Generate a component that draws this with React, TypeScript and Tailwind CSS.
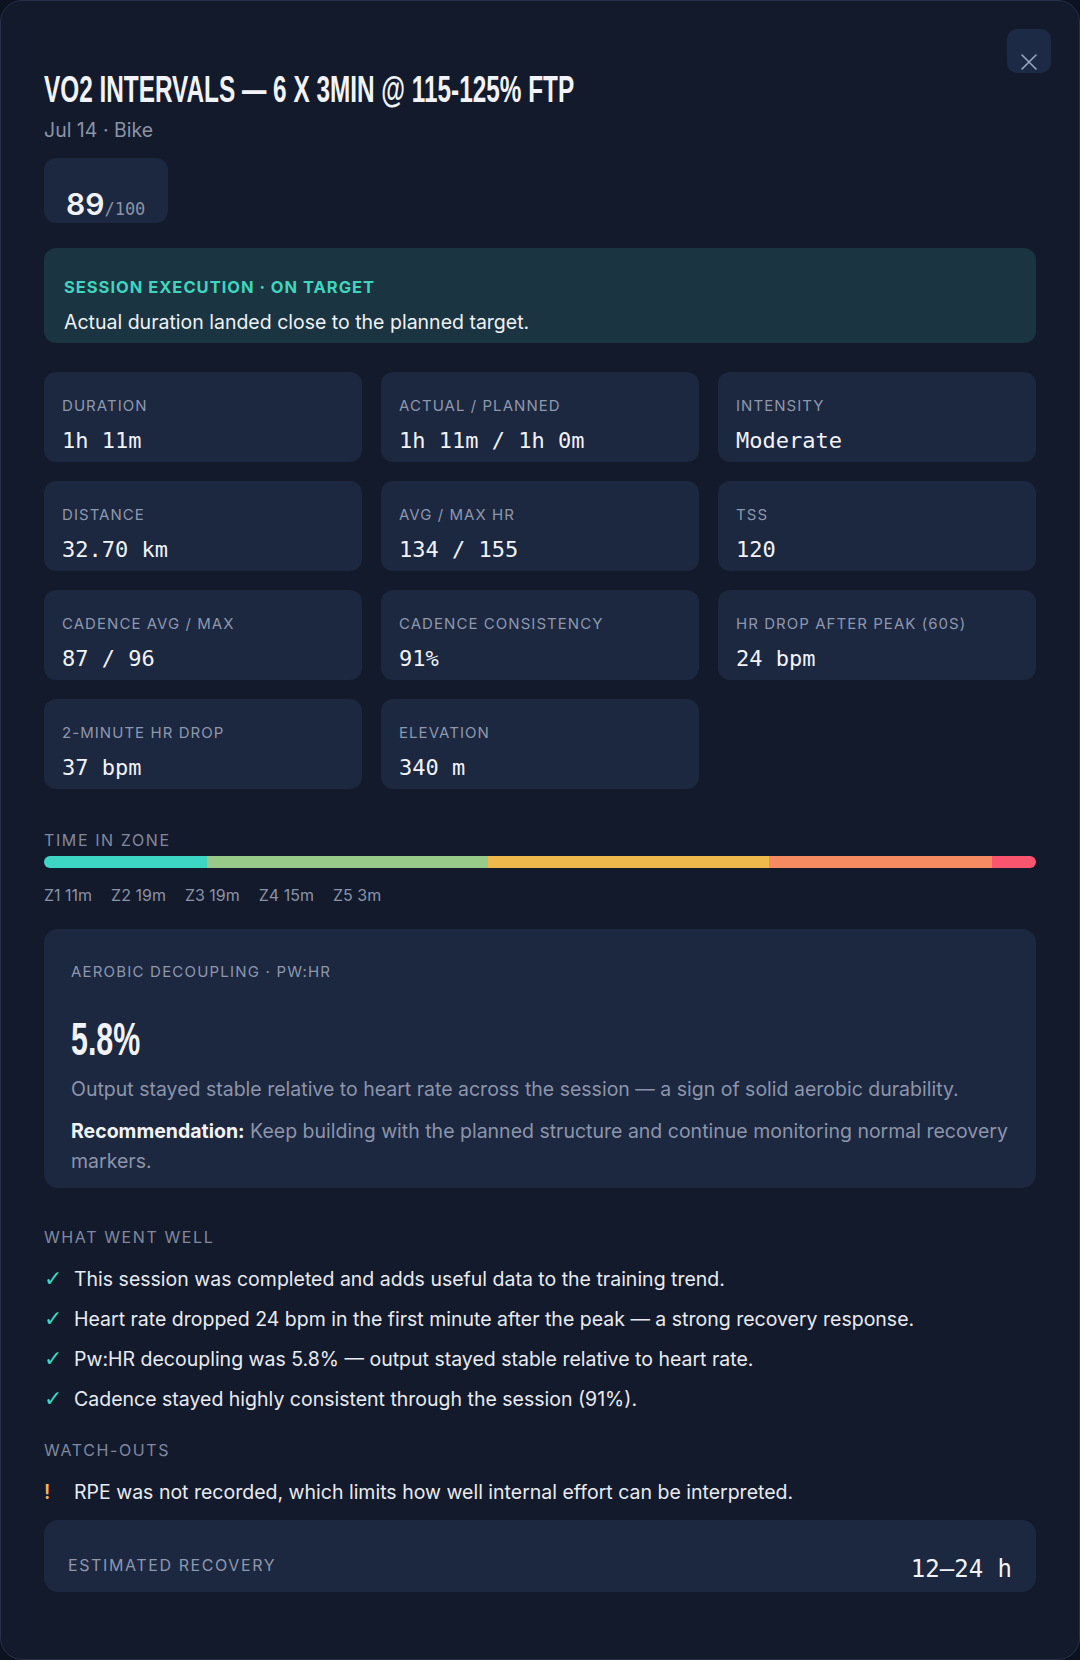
import React from 'react';

interface Metric {
  label: string;
  value: string;
}

interface Zone {
  name: string;
  minutes: number;
  color: string;
}

const metrics: Metric[] = [
  { label: 'Duration', value: '1h 11m' },
  { label: 'Actual / Planned', value: '1h 11m / 1h 0m' },
  { label: 'Intensity', value: 'Moderate' },
  { label: 'Distance', value: '32.70 km' },
  { label: 'Avg / Max HR', value: '134 / 155' },
  { label: 'TSS', value: '120' },
  { label: 'Cadence Avg / Max', value: '87 / 96' },
  { label: 'Cadence Consistency', value: '91%' },
  { label: 'HR Drop After Peak (60s)', value: '24 bpm' },
  { label: '2-Minute HR Drop', value: '37 bpm' },
  { label: 'Elevation', value: '340 m' },
];

const zones: Zone[] = [
  { name: 'Z1', minutes: 11, color: 'bg-[#3dd6c4]' },
  { name: 'Z2', minutes: 19, color: 'bg-[#98cb8a]' },
  { name: 'Z3', minutes: 19, color: 'bg-[#f0b94c]' },
  { name: 'Z4', minutes: 15, color: 'bg-[#f68a60]' },
  { name: 'Z5', minutes: 3, color: 'bg-[#f9556f]' },
];

const wentWell = [
  'This session was completed and adds useful data to the training trend.',
  'Heart rate dropped 24 bpm in the first minute after the peak — a strong recovery response.',
  'Pw:HR decoupling was 5.8% — output stayed stable relative to heart rate.',
  'Cadence stayed highly consistent through the session (91%).',
];

const watchOuts = ['RPE was not recorded, which limits how well internal effort can be interpreted.'];

const MetricCard: React.FC<Metric> = ({ label, value }) => (
  <div className="h-[90px] rounded-[12px] bg-[#1c2740] px-[18px] pt-[24px]">
    <div className="text-[15px] leading-5 uppercase tracking-[0.07em] text-[#8e98ad]">{label}</div>
    <div className="mt-[11px] font-['DejaVu_Sans_Mono',monospace] text-[22px] leading-[28px] text-[#f1f3f8]">
      {value}
    </div>
  </div>
);

const SectionLabel: React.FC<{ children: React.ReactNode; className?: string }> = ({ children, className }) => (
  <div className={`text-[16px] leading-5 uppercase tracking-[0.1em] text-[#8089a0] ${className ?? ''}`}>{children}</div>
);

export default function App() {
  const totalMinutes = zones.reduce((sum, z) => sum + z.minutes, 0);

  return (
    <div className="min-h-[1660px] bg-[#0d1220] font-['Inter',sans-serif]">
      <div className="relative h-[1660px] overflow-hidden rounded-[22px] border border-[#263049] bg-[#131a2b] px-[43px] pt-[70px]">
        {/* close button */}
        <button className="absolute right-[28px] top-[28px] flex h-[44px] w-[44px] justify-center rounded-[10px] bg-[#1d2a45] pt-[25px]">
          <svg width="16" height="16" viewBox="0 0 16 16" fill="none" stroke="#9aa6bf" strokeWidth="1.6" strokeLinecap="round">
            <path d="M1 1L15 15M15 1L1 15" />
          </svg>
        </button>

        {/* header */}
        <h1 className="origin-left scale-x-[0.658] whitespace-nowrap font-['Liberation_Sans',Arial,sans-serif] text-[37px] font-bold leading-none text-[#f1f3f8]">
          VO2 INTERVALS — 6 X 3MIN @ 115-125% FTP
        </h1>
        <div className="mt-[10px] text-[19.5px] leading-6 text-[#8b93a7]">Jul 14 · Bike</div>

        <div className="mt-[16px] flex h-[65px] w-[124px] items-end rounded-[12px] bg-[#1c2740] px-[22px] pb-[4px]">
          <div className="leading-none">
            <span className="text-[30px] font-semibold text-[#f1f3f8]">89</span>
            <span className="font-['DejaVu_Sans_Mono',monospace] text-[17px] text-[#8b93a7]">/100</span>
          </div>
        </div>

        {/* execution summary */}
        <div className="mt-[25px] h-[95px] rounded-[12px] bg-[#1a3441] px-[20px] pt-[29px]">
          <div className="text-[16.5px] font-bold leading-5 tracking-[0.06em] text-[#3fd5bf]">SESSION EXECUTION · ON TARGET</div>
          <div className="mt-[13px] text-[19.5px] leading-6 text-[#eef1f6]">Actual duration landed close to the planned target.</div>
        </div>

        {/* metrics */}
        <div className="mt-[29px] grid grid-cols-3 gap-[19px]">
          {metrics.map((m) => (
            <MetricCard key={m.label} label={m.label} value={m.value} />
          ))}
        </div>

        {/* time in zone */}
        <SectionLabel className="mt-[41px] text-[#9aa3b5]">Time in Zone</SectionLabel>
        <div className="mt-[6px] flex h-3 overflow-hidden rounded-full">
          {zones.map((z) => (
            <div key={z.name} className={`h-full ${z.color}`} style={{ width: `${(z.minutes / totalMinutes) * 100}%` }} />
          ))}
        </div>
        <div className="mt-[17px] flex gap-[19px] text-[16px] leading-5 text-[#8a93a8]">
          {zones.map((z) => (
            <span key={z.name}>
              {z.name} {z.minutes}m
            </span>
          ))}
        </div>

        {/* decoupling */}
        <div className="mt-[24px] rounded-[14px] bg-[#1c2740] px-[27px] pb-[12px] pt-[33px]">
          <div className="text-[15px] leading-5 uppercase tracking-[0.08em] text-[#8e98ad]">Aerobic Decoupling · Pw:HR</div>
          <div className="mt-[34px] origin-left scale-x-[0.66] font-['Liberation_Sans',Arial,sans-serif] text-[46px] font-bold leading-none text-[#f1f3f8]">
            5.8%
          </div>
          <p className="mt-[12px] text-[19.5px] leading-[30px] text-[#8c95aa]">
            Output stayed stable relative to heart rate across the session — a sign of solid aerobic durability.
          </p>
          <p className="mt-[12px] text-[19.5px] leading-[30px] text-[#8c95aa]">
            <span className="font-bold text-[#f1f3f8]">Recommendation:</span> Keep building with the planned structure and continue
            monitoring normal recovery markers.
          </p>
        </div>

        {/* notes */}
        <SectionLabel className="mt-[39px]">What went well</SectionLabel>
        <ul className="mt-[18px] flex flex-col gap-3">
          {wentWell.map((t) => (
            <li key={t} className="flex text-[19.5px] leading-[28px] text-[#e8ebf2]">
              <span className="w-[30px] shrink-0 font-['DejaVu_Sans',sans-serif] text-[22px] leading-[28px] text-[#3dd6c4]">✓</span>
              <span>{t}</span>
            </li>
          ))}
        </ul>

        <SectionLabel className="mt-[27px]">Watch-outs</SectionLabel>
        <ul className="mt-[18px] flex flex-col gap-3">
          {watchOuts.map((t) => (
            <li key={t} className="flex text-[19.5px] leading-[28px] text-[#e8ebf2]">
              <span className="w-[30px] shrink-0 font-semibold text-[#f0b94c]">!</span>
              <span>{t}</span>
            </li>
          ))}
        </ul>

        {/* recovery */}
        <div className="mt-[14px] flex h-[72px] items-end justify-between rounded-[14px] bg-[#1c2740] px-[24px] pb-[9px]">
          <div className="mb-[8px] text-[16px] leading-5 uppercase tracking-[0.1em] text-[#8e98ad]">Estimated Recovery</div>
          <div className="font-['DejaVu_Sans_Mono',monospace] text-[24px] leading-[28px] text-[#f1f3f8]">12–24 h</div>
        </div>
      </div>
    </div>
  );
}
